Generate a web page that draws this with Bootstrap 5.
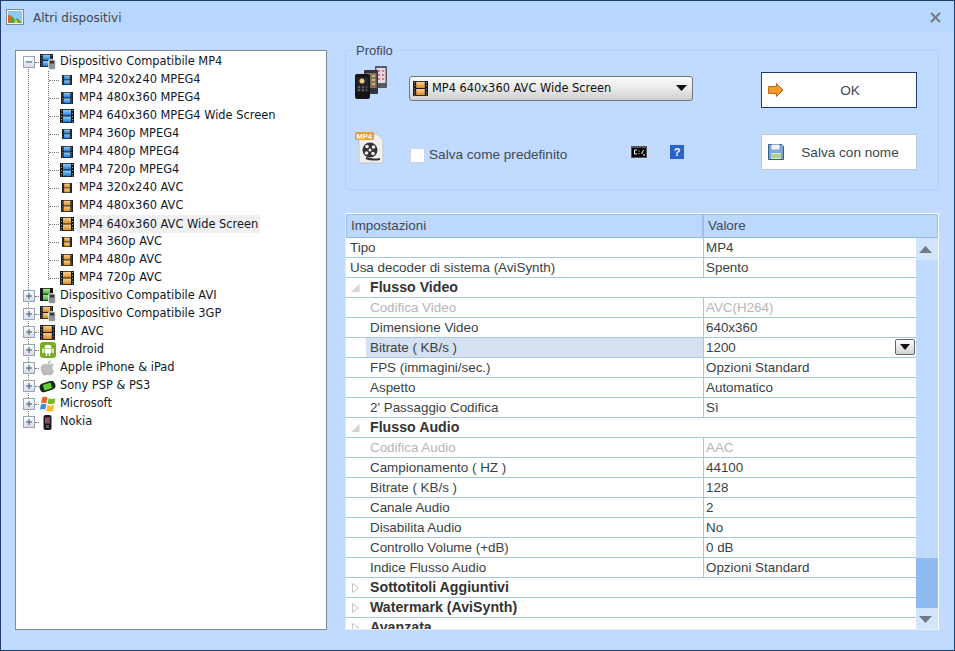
<!DOCTYPE html>
<html lang="it">
<head>
<meta charset="utf-8">
<title>Altri dispositivi</title>
<link href="https://cdn.jsdelivr.net/npm/bootstrap@5.3.0/dist/css/bootstrap.min.css" rel="stylesheet">
<style>
html,body{height:100%;margin:0;overflow:hidden;background:#c0dcff}
.dlg{width:955px;height:651px;border:1px solid #1d3d6e;background:#c0dbff;font-family:"Liberation Sans",Arial,sans-serif;color:#3c4650}
.dlg-title{height:31px;background:#b8d7ff;padding-left:5px;font-family:"DejaVu Sans",sans-serif;font-size:12px;color:#444}
.dlg-title .ttl{margin-left:9px;padding-top:3px}
.dlg-close{margin-right:13px;margin-top:2px}
.dlg-body{padding:18px 15px 0 14px;gap:18px}
.tv{width:312px;height:580px;background:#fff;border:1px solid #7f8b98;padding-top:2px;font-family:"DejaVu Sans",sans-serif;font-size:11.42px;color:#101828;position:relative;flex:none}
.tv ul{list-style:none;margin:0;padding:0;position:relative}
.tv-root::before{content:"";position:absolute;left:12px;top:14px;height:355px;border-left:1px dotted #777}
.tv-sub::before{content:"";position:absolute;left:32px;top:0;height:209px;border-left:1px dotted #777}
.tv-row{height:18px;display:flex;align-items:center;white-space:nowrap;position:relative}
.tv-root>li>.tv-row{padding-left:7px}
.tv-sub .tv-row{padding-left:33px}
.tick{display:block;height:0;border-top:1px dotted #777;flex:none}
.tv-root>li>.tv-row .tick{width:4px}
.tv-sub .tick{width:10px}
.box{width:12px;height:12px;flex:none;position:relative;z-index:1;background:#fff}
.slot{width:15px;height:18px;flex:none;display:flex;align-items:center;justify-content:center}
.tv-root>li>.tv-row .slot{width:17px;margin-right:4px}
.tv-sub .slot{margin-right:5px}
.sel{background:#f0f0f0;padding:0 2px;margin-left:-2px;height:18px;line-height:18px}
.side{width:594px;flex:none}
.grp{height:140px;margin:0 0 23px;padding:0;border:1px solid #b4cfee;border-radius:3px;position:relative}
.grp-lg{position:absolute;left:5px;top:-8px;background:#c0dbff;padding:0 5px;font-size:13px;line-height:15px;width:auto;float:none;margin:0;color:#445}
.grp-row{position:absolute;left:0;right:0;display:flex;align-items:center}
.grp-row1{top:16px;height:42px}
.grp-row2{top:80px;height:42px}
.ico-w{width:54px;padding-left:9px;flex:none;line-height:0}
.ico-ph{margin-bottom:12px}
.ico-fl{margin-bottom:10px}
.cbo{width:284px;height:25px;flex:none;border:1px solid #6f7780;border-radius:3px;background:linear-gradient(#fbfbfb,#e9e9e9 50%,#cfcfcf);font-family:"DejaVu Sans",sans-serif;font-size:11.42px;color:#111;padding:0 5px 0 3px;gap:4px;margin-left:9px}
.cbo .flex-grow-1{padding-top:2px}
.chk{width:15px;height:15px;background:#fff;border:1px solid #cbd6e4;flex:none;margin:6px 4px 0 10px}
.chk-lbl{font-size:13.6px;color:#3f4a55;width:202px;flex:none;margin-top:6px}
.cmd{margin-right:23px}
.btn.act{width:156px;height:36px;flex:none;background:#fff;border-radius:0;font-size:13.6px;color:#3c4650;padding:2px 0 0 6px;position:absolute;left:415px;display:flex;align-items:center}
.btn.act svg{flex:none;margin-top:-2px}
.btn.act .t{flex:1;text-align:center}
.act-ok{border:1px solid #1d3d6e;top:5px}
.act-sv{border:1px solid #b9c6d6;top:3px}
.pg{width:594px;height:417px;border:1px solid #fff;border-bottom-color:#e8f0fb;border-left-color:#dfeaf8;background:#fff;overflow:hidden;position:relative;font-size:13.4px;color:#3a3f45}
.pg-hd{height:24px;background:#bcd8fc;border-top:1px solid #9cc0ec;border-left:1px solid #9cc0ec;border-right:1px solid #9cc0ec;border-bottom:1px solid #8fb7e8;display:flex;align-items:center;font-size:13.4px;color:#3f4a55}
.pg-hd .c1{width:357px;padding-left:4px;border-right:2px solid #9cc0ec;height:100%;line-height:22px}
.pg-hd .c2{padding-left:4px}
.pg-main{display:flex;height:392px}
.pg-rows{width:570px;flex:none}
.pg-r{height:20px;display:flex;border-bottom:1px solid #a5c6e8;line-height:19px;white-space:nowrap;font-size:13.4px}
.c-n{width:358px;flex:none;padding-left:4px;border-right:1px solid #a5c6e8}
.pg-r.sub .c-n{padding-left:24px}
.c-v{flex:1;padding-left:2px;position:relative}
.pg-r.off{color:#b6b6b6}
.pg-r.cat{font-weight:700;padding-left:4px;align-items:center;font-size:14.2px;color:#333}
.pg-r.cat svg{margin-right:9px;flex:none}
.pg-r.on .c-n{background:linear-gradient(90deg,#fff 20px,#d5e1f0 20px)}
.drop{position:absolute;right:1px;top:1px;width:20px;height:16px;border:1px solid #666;border-radius:2px;background:linear-gradient(#fff,#d0d0d0);display:flex;align-items:center;justify-content:center}
.pg-sb{width:22px;flex:none;background:#c0dbff;display:flex;flex-direction:column}
.sb-btn{height:22px;flex:none;display:flex;align-items:center;justify-content:center;background:#d3e5fd;padding-right:3px}
.sb-track{flex:1;position:relative}
.sb-thumb{position:absolute;left:0;right:0;bottom:0;height:50px;background:#8fbaf2}
</style>
</head>
<body>
<svg width="0" height="0" class="position-absolute">
<defs>
<linearGradient id="gb" x1="0" y1="0" x2="0" y2="1"><stop offset="0" stop-color="#8fd0fb"/><stop offset="1" stop-color="#1f78d0"/></linearGradient>
<linearGradient id="go" x1="0" y1="0" x2="0" y2="1"><stop offset="0" stop-color="#f8d48c"/><stop offset="1" stop-color="#d98a2a"/></linearGradient>
<linearGradient id="gg" x1="0" y1="0" x2="0" y2="1"><stop offset="0" stop-color="#b5ea8a"/><stop offset="1" stop-color="#3cae38"/></linearGradient>
<linearGradient id="gx" x1="0" y1="0" x2="0" y2="1"><stop offset="0" stop-color="#fff"/><stop offset="1" stop-color="#d6dae6"/></linearGradient>
<symbol id="fb" viewBox="0 0 14 14"><rect width="14" height="14" fill="#15181c"/><rect x="3" y=".8" width="8" height="5.7" fill="url(#gb)"/><rect x="3" y="7.5" width="8" height="5.7" fill="url(#gb)"/><path d="M1 1.500h1M1 4.500h1M1 7.500h1M1 10.500h1M1 13h1M12 1.500h1M12 4.500h1M12 7.500h1M12 10.500h1M12 13h1" stroke="#9aa" stroke-width="1"/></symbol>
<symbol id="fo" viewBox="0 0 14 14"><rect width="14" height="14" fill="#15181c"/><rect x="3" y=".8" width="8" height="5.700" fill="url(#go)"/><rect x="3" y="7.500" width="8" height="5.700" fill="url(#go)"/><path d="M1 1.500h1M1 4.500h1M1 7.500h1M1 10.500h1M1 13h1M12 1.500h1M12 4.500h1M12 7.500h1M12 10.500h1M12 13h1" stroke="#9aa" stroke-width="1"/></symbol>
<symbol id="dv-b" viewBox="0 0 16 16"><use href="#fb" width="13" height="13"/><rect x="8.500" y="5.500" width="7" height="10" rx="1.500" fill="#8d9498" stroke="#fff" stroke-width=".6"/><rect x="10" y="7" width="4" height="2.500" fill="#333"/></symbol>
<symbol id="dv-o" viewBox="0 0 16 16"><use href="#fo" width="13" height="13"/><rect x="8.500" y="5.500" width="7" height="10" rx="1.500" fill="#8d9498" stroke="#fff" stroke-width=".6"/><rect x="10" y="7" width="4" height="2.500" fill="#333"/></symbol>
<symbol id="dv-g" viewBox="0 0 16 16"><rect width="13" height="13" fill="#15181c"/><rect x="3" y=".8" width="7" height="5" fill="url(#gg)"/><rect x="3" y="6.800" width="7" height="5.400" fill="url(#gg)"/><rect x="8.500" y="5.500" width="7" height="10" rx="1.500" fill="#8d9498" stroke="#fff" stroke-width=".6"/><rect x="10" y="7" width="4" height="2.500" fill="#333"/></symbol>
<symbol id="xp" viewBox="0 0 12 12"><rect x=".5" y=".5" width="11" height="11" fill="url(#gx)" stroke="#9aa6b8"/><path d="M3 6h6M6 3v6" stroke="#33506e"/></symbol>
<symbol id="xm" viewBox="0 0 12 12"><rect x=".5" y=".5" width="11" height="11" fill="url(#gx)" stroke="#9aa6b8"/><path d="M3 6h6" stroke="#33506e"/></symbol>
</defs>
</svg>
<div class="dlg">
  <div class="dlg-title d-flex align-items-center">
    <svg width="18" height="16" viewBox="0 0 18 16"><rect x=".5" y=".5" width="17" height="15" fill="#eef3f8" stroke="#7f8a96"/><rect x="2" y="2" width="14" height="12" fill="#8fc8ee"/><path d="M2 14l4-7 3 4 2-2 5 5z" fill="#4aa83a"/><path d="M2 14V6l4 1-2 7z" fill="#d8642a"/><path d="M8 14l2-4 2 4z" fill="#f0d040"/></svg>
    <span class="ttl flex-grow-1">Altri dispositivi</span>
    <svg class="dlg-close" width="11" height="11" viewBox="0 0 11 11"><path d="M1 1l9 9M10 1l-9 9" stroke="#6f7a86" stroke-width="2"/></svg>
  </div>
  <div class="dlg-body d-flex">
    <div class="tv">
      <ul class="tv-root">
        <li>
          <div class="tv-row"><svg class="box" width="12" height="12"><use href="#xm"/></svg><i class="tick"></i><span class="slot"><svg width="16" height="16"><use href="#dv-b"/></svg></span><span>Dispositivo Compatibile MP4</span></div>
          <ul class="tv-sub">
            <li><div class="tv-row"><i class="tick"></i><span class="slot"><svg width="10" height="10"><use href="#fb"/></svg></span><span>MP4 320x240 MPEG4</span></div></li>
            <li><div class="tv-row"><i class="tick"></i><span class="slot"><svg width="12" height="12"><use href="#fb"/></svg></span><span>MP4 480x360 MPEG4</span></div></li>
            <li><div class="tv-row"><i class="tick"></i><span class="slot"><svg width="14" height="14"><use href="#fb"/></svg></span><span>MP4 640x360 MPEG4 Wide Screen</span></div></li>
            <li><div class="tv-row"><i class="tick"></i><span class="slot"><svg width="10" height="10"><use href="#fb"/></svg></span><span>MP4 360p MPEG4</span></div></li>
            <li><div class="tv-row"><i class="tick"></i><span class="slot"><svg width="12" height="12"><use href="#fb"/></svg></span><span>MP4 480p MPEG4</span></div></li>
            <li><div class="tv-row"><i class="tick"></i><span class="slot"><svg width="14" height="14"><use href="#fb"/></svg></span><span>MP4 720p MPEG4</span></div></li>
            <li><div class="tv-row"><i class="tick"></i><span class="slot"><svg width="10" height="10"><use href="#fo"/></svg></span><span>MP4 320x240 AVC</span></div></li>
            <li><div class="tv-row"><i class="tick"></i><span class="slot"><svg width="12" height="12"><use href="#fo"/></svg></span><span>MP4 480x360 AVC</span></div></li>
            <li><div class="tv-row"><i class="tick"></i><span class="slot"><svg width="14" height="14"><use href="#fo"/></svg></span><span class="sel">MP4 640x360 AVC Wide Screen</span></div></li>
            <li><div class="tv-row"><i class="tick"></i><span class="slot"><svg width="10" height="10"><use href="#fo"/></svg></span><span>MP4 360p AVC</span></div></li>
            <li><div class="tv-row"><i class="tick"></i><span class="slot"><svg width="12" height="12"><use href="#fo"/></svg></span><span>MP4 480p AVC</span></div></li>
            <li><div class="tv-row"><i class="tick"></i><span class="slot"><svg width="14" height="14"><use href="#fo"/></svg></span><span>MP4 720p AVC</span></div></li>
          </ul>
        </li>
        <li><div class="tv-row"><svg class="box" width="12" height="12"><use href="#xp"/></svg><i class="tick"></i><span class="slot"><svg width="16" height="16"><use href="#dv-g"/></svg></span><span>Dispositivo Compatibile AVI</span></div></li>
        <li><div class="tv-row"><svg class="box" width="12" height="12"><use href="#xp"/></svg><i class="tick"></i><span class="slot"><svg width="16" height="16"><use href="#dv-o"/></svg></span><span>Dispositivo Compatibile 3GP</span></div></li>
        <li><div class="tv-row"><svg class="box" width="12" height="12"><use href="#xp"/></svg><i class="tick"></i><span class="slot"><svg width="15" height="15"><use href="#fo"/></svg></span><span>HD AVC</span></div></li>
        <li><div class="tv-row"><svg class="box" width="12" height="12"><use href="#xp"/></svg><i class="tick"></i><span class="slot"><svg width="16" height="16" viewBox="0 0 16 16"><rect width="16" height="16" rx="3" fill="#79ad1f"/><path d="M4.500 6a3.500 3.200 0 0 1 7 0z" fill="#fff"/><rect x="4.500" y="6.500" width="7" height="5" rx="1" fill="#fff"/><path d="M3 7v3.500M13 7v3.500M6.500 11v2.500M9.500 11v2.500" stroke="#fff" stroke-width="1.400" stroke-linecap="round"/></svg></span><span>Android</span></div></li>
        <li><div class="tv-row"><svg class="box" width="12" height="12"><use href="#xp"/></svg><i class="tick"></i><span class="slot"><svg width="15" height="16" viewBox="0 0 15 16"><path d="M7.500 4.500C6 3.500 4.500 3.500 3 4.200 1 5.200.3 7.500.8 10c.5 2.500 2 5.500 3.700 5.500 1 0 1.800-.6 3-.6s2 .6 3 .6c1.500 0 3-2.500 3.700-4.500-2.200-1-2.600-4.600-.2-5.900-1-1.300-2.400-1.500-3.500-1.200-1 .2-2 .6-3 .6z" fill="#bdbdbd"/><path d="M7.500 4C7.500 2 9 .5 11 .3 11 2.500 9.500 4 7.500 4z" fill="#bdbdbd"/></svg></span><span>Apple iPhone &amp; iPad</span></div></li>
        <li><div class="tv-row"><svg class="box" width="12" height="12"><use href="#xp"/></svg><i class="tick"></i><span class="slot"><svg width="17" height="13" viewBox="0 0 17 13"><rect x=".5" y="2" width="16" height="9" rx="4" fill="#1c2a1c" transform="rotate(-18 8.500 6.500)"/><rect x="4.500" y="3.500" width="8" height="6" fill="#62d038" transform="rotate(-18 8.500 6.500)"/></svg></span><span>Sony PSP &amp; PS3</span></div></li>
        <li><div class="tv-row"><svg class="box" width="12" height="12"><use href="#xp"/></svg><i class="tick"></i><span class="slot"><svg width="16" height="16" viewBox="0 0 15 15"><path d="M2 1.500c2-1 3.500-1 5 0L6 7C4.500 6 3 6 1 7z" fill="#e8602a"/><path d="M8 2c2 1 3.500 1 6.500 0l-1 5c-2 1-4 1-6.500 0z" fill="#7cb82a"/><path d="M.8 8c2-1 3.500-1 5.200 0l-1 5c-1.500-1-3-1-5 0z" fill="#3a8ee0"/><path d="M7 8.500c2 1 4 1 6.300 0L12.300 14c-2 1-4 1-6.300 0z" fill="#f4c020"/></svg></span><span>Microsoft</span></div></li>
        <li><div class="tv-row"><svg class="box" width="12" height="12"><use href="#xp"/></svg><i class="tick"></i><span class="slot"><svg width="9" height="17" viewBox="0 0 9 16"><rect x=".5" y=".5" width="8" height="15" rx="2" fill="#1a1a1e"/><rect x="2" y="3" width="5" height="6" fill="#8a4a6a"/><rect x="3" y="10.500" width="3" height="3" fill="#555"/></svg></span><span>Nokia</span></div></li>
      </ul>
    </div>
    <div class="side">
      <fieldset class="grp">
        <legend class="grp-lg">Profilo</legend>
        <div class="grp-row grp-row1">
          <span class="ico-w ico-ph"><svg width="32" height="33" viewBox="0 0 32 33"><rect x="20" y="0" width="12" height="22" rx="1" fill="#55585f"/><rect x="21.500" y="2" width="9" height="15" fill="#e6d8de"/><path d="M23 5h2M27 5h2M23 9h2M27 9h2M23 13h2M27 13h2" stroke="#c85a7a" stroke-width="1.500"/><rect x="9" y="4" width="14" height="24" rx="1" fill="#34343a"/><rect x="10.500" y="7" width="11" height="15" fill="#8a7058"/><path d="M12 10h3M17 10h3M12 14h3M17 14h3M12 18h3M17 18h3" stroke="#d8d0a0" stroke-width="1.500"/><rect x="0" y="8" width="15" height="25" rx="2" fill="#141416"/><rect x="1.500" y="11" width="12" height="15" fill="#26262a"/><circle cx="7" cy="15" r="2.500" fill="#e8d080"/><path d="M3 21h2M7 21h2M11 21h1M3 24h2M7 24h2M11 24h1" stroke="#8a9a90"/></svg></span>
          <div class="cbo d-flex align-items-center"><svg width="15" height="15"><use href="#fo"/></svg><span class="flex-grow-1">MP4 640x360 AVC Wide Screen</span><svg width="11" height="6" viewBox="0 0 11 6"><path d="M0 0h11L5.500 6z" fill="#111"/></svg></div>
          <button type="button" class="btn act act-ok"><svg width="16" height="14" viewBox="0 0 16 14"><path d="M.5 3.500h8V.5L15 7l-6.500 6.500v-3h-8z" fill="#f49a28" stroke="#b86a10"/></svg><span class="t">OK</span></button>
        </div>
        <div class="grp-row grp-row2">
          <span class="ico-w ico-fl"><svg width="30" height="33" viewBox="0 0 30 33"><path d="M4 3h18l6 6v23H4z" fill="#f0f0ee" stroke="#c4c4c4"/><rect y="1" width="19" height="8" rx="1" fill="#e8a030"/><text x="1.500" y="8" font-family="Liberation Sans,sans-serif" font-size="7.500" font-weight="700" fill="#fff">MP4</text><circle cx="15" cy="19" r="7.500" fill="#333"/><circle cx="15" cy="19" r="1.500" fill="#eee"/><circle cx="12" cy="15.500" r="1.800" fill="#eee"/><circle cx="18.500" cy="16" r="1.800" fill="#eee"/><circle cx="11.500" cy="22" r="1.800" fill="#eee"/><circle cx="18" cy="22.500" r="1.800" fill="#eee"/><path d="M11 27c4 2 8 2 14 1" stroke="#333" stroke-width="2" fill="none"/></svg></span>
          <span class="chk"></span><span class="chk-lbl">Salva come predefinito</span>
          <svg class="cmd" width="16" height="12" viewBox="0 0 16 12"><rect width="16" height="12" fill="#555"/><rect x="1" y="2" width="14" height="9" fill="#000"/><path d="M6 4H3.500v4H6M8 4.500v1M8 7v1M10.500 8l2-4M12 9h2" stroke="#fff" fill="none"/></svg>
          <svg width="14" height="14" viewBox="0 0 14 14"><rect width="14" height="14" fill="#2a62d0"/><text x="7" y="11" text-anchor="middle" font-family="Liberation Sans,sans-serif" font-size="11" font-weight="700" fill="#fff">?</text></svg>
          <button type="button" class="btn act act-sv"><svg width="16" height="16" viewBox="0 0 16 16"><path d="M.5.500h13l2 2v13H.5z" fill="#7aa6dc" stroke="#36598c"/><rect x="3.500" y=".5" width="8" height="5" fill="#eef3fa"/><rect x="3" y="9" width="10" height="6" fill="#dff0c8"/><path d="M3 11h10M3 13h10" stroke="#80b050"/></svg><span class="t">Salva con nome</span></button>
        </div>
      </fieldset>
      <div class="pg">
        <div class="pg-hd"><div class="c1">Impostazioni</div><div class="c2">Valore</div></div>
        <div class="pg-main">
          <div class="pg-rows">
            <div class="pg-r"><div class="c-n">Tipo</div><div class="c-v">MP4</div></div>
            <div class="pg-r"><div class="c-n">Usa decoder di sistema (AviSynth)</div><div class="c-v">Spento</div></div>
            <div class="pg-r cat"><svg width="11" height="10" viewBox="0 0 11 10"><path d="M9.500 1v8H1z" fill="#d4d4d4"/></svg>Flusso Video</div>
            <div class="pg-r sub off"><div class="c-n">Codifica Video</div><div class="c-v">AVC(H264)</div></div>
            <div class="pg-r sub"><div class="c-n">Dimensione Video</div><div class="c-v">640x360</div></div>
            <div class="pg-r sub on"><div class="c-n">Bitrate ( KB/s )</div><div class="c-v">1200<span class="drop"><svg width="10" height="6" viewBox="0 0 10 6"><path d="M0 0h10L5 6z" fill="#111"/></svg></span></div></div>
            <div class="pg-r sub"><div class="c-n">FPS (immagini/sec.)</div><div class="c-v">Opzioni Standard</div></div>
            <div class="pg-r sub"><div class="c-n">Aspetto</div><div class="c-v">Automatico</div></div>
            <div class="pg-r sub"><div class="c-n">2' Passaggio Codifica</div><div class="c-v">Sì</div></div>
            <div class="pg-r cat"><svg width="11" height="10" viewBox="0 0 11 10"><path d="M9.500 1v8H1z" fill="#d4d4d4"/></svg>Flusso Audio</div>
            <div class="pg-r sub off"><div class="c-n">Codifica Audio</div><div class="c-v">AAC</div></div>
            <div class="pg-r sub"><div class="c-n">Campionamento ( HZ )</div><div class="c-v">44100</div></div>
            <div class="pg-r sub"><div class="c-n">Bitrate ( KB/s )</div><div class="c-v">128</div></div>
            <div class="pg-r sub"><div class="c-n">Canale Audio</div><div class="c-v">2</div></div>
            <div class="pg-r sub"><div class="c-n">Disabilita Audio</div><div class="c-v">No</div></div>
            <div class="pg-r sub"><div class="c-n">Controllo Volume (+dB)</div><div class="c-v">0 dB</div></div>
            <div class="pg-r sub"><div class="c-n">Indice Flusso Audio</div><div class="c-v">Opzioni Standard</div></div>
            <div class="pg-r cat"><svg width="11" height="12" viewBox="0 0 11 12"><path d="M2.500 1.500l6 4.500-6 4.500z" fill="#fff" stroke="#c4c4c4"/></svg>Sottotitoli Aggiuntivi</div>
            <div class="pg-r cat"><svg width="11" height="12" viewBox="0 0 11 12"><path d="M2.500 1.500l6 4.500-6 4.500z" fill="#fff" stroke="#c4c4c4"/></svg>Watermark (AviSynth)</div>
            <div class="pg-r cat"><svg width="11" height="12" viewBox="0 0 11 12"><path d="M2.500 1.500l6 4.500-6 4.500z" fill="#fff" stroke="#c4c4c4"/></svg>Avanzata</div>
          </div>
          <div class="pg-sb">
            <div class="sb-btn"><svg width="13" height="7" viewBox="0 0 13 7"><path d="M0 7h13L6.500 0z" fill="#6f7a86"/></svg></div>
            <div class="sb-track"><div class="sb-thumb"></div></div>
            <div class="sb-btn"><svg width="13" height="7" viewBox="0 0 13 7"><path d="M0 0h13L6.500 7z" fill="#6f7a86"/></svg></div>
          </div>
        </div>
      </div>
    </div>
  </div>
</div>
</body>
</html>
